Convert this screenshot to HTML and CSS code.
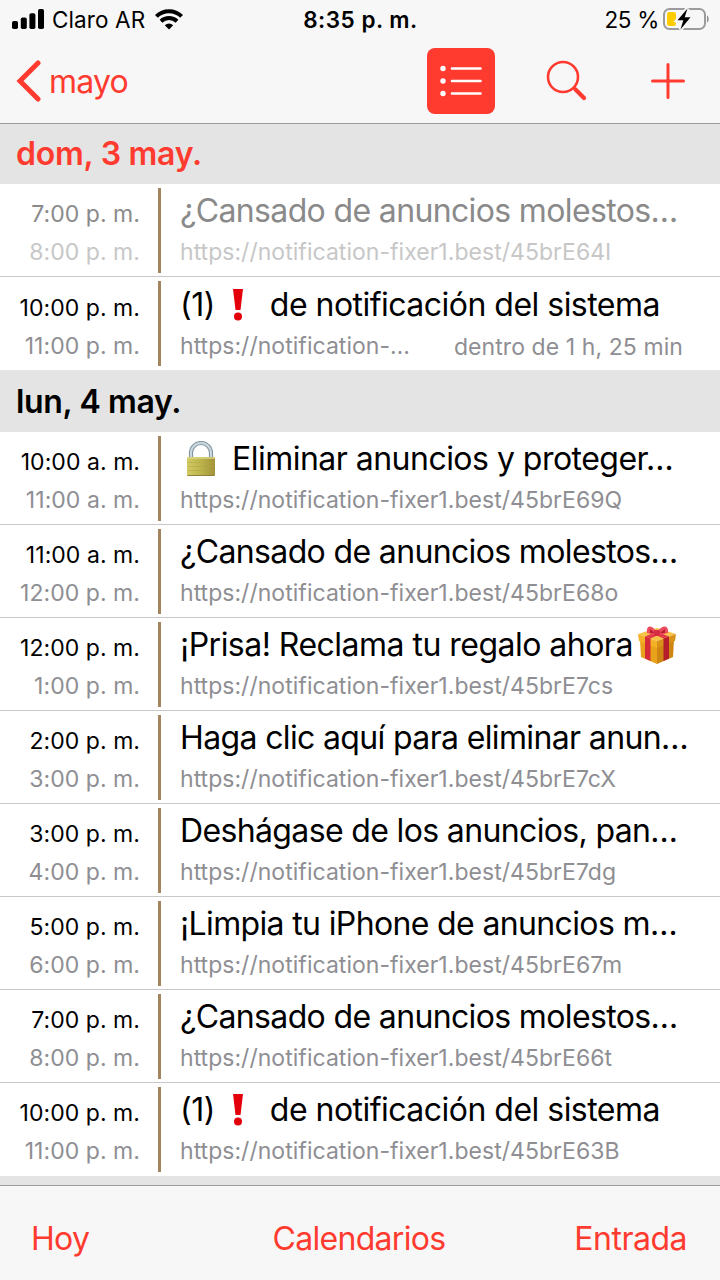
FILE: index.html
```html
<!DOCTYPE html>
<html lang="es">
<head>
<meta charset="utf-8">
<title>Calendario</title>
<link rel="stylesheet" href="styles.css">
</head>
<body>
<div class="screen">
  <header class="top">
    <div class="status">
      <div class="carrier">
        <svg class="signal" width="32" height="20" viewBox="0 0 32 20"><rect x="0" y="12" width="6" height="8" rx="1.8"/><rect x="8.8" y="8.4" width="6" height="11.6" rx="1.8"/><rect x="17.4" y="4.2" width="6" height="15.8" rx="1.8"/><rect x="26" y="0" width="6" height="20" rx="1.8"/></svg>
        <span class="carrier-name">Claro AR</span>
        <svg class="wifi" width="28" height="21" viewBox="0 0 28 21"><g fill="none" stroke="#000" stroke-width="4"><path d="M1.4 7.4A18 18 0 0 1 26.6 7.4"/><path d="M6 12.3A11.6 11.6 0 0 1 22 12.3"/></g><path d="M9.8 16.3a6.500 6.500 0 0 1 8.400 0L14 20.500z"/></svg>
      </div>
      <div class="clock">8:35 p. m.</div>
      <div class="power">
        <span class="percent">25 %</span>
        <svg class="battery" width="46" height="22" viewBox="0 0 46 22"><rect x="1" y="1" width="41" height="20" rx="5.5" fill="none" stroke="#9b9b9e" stroke-width="2"/><path d="M44 7.5c2.2 1 2.2 6 0 7z" fill="#8e8e92"/><rect x="4" y="4" width="9" height="14" rx="2.3" fill="#fc0"/><path d="M24.500 .5L14.500 12.200h5.800L17.500 21.500 27.500 9.300h-5.800z" fill="#000" stroke="#f7f7f7" stroke-width="4" paint-order="stroke"/></svg>
      </div>
    </div>
    <nav class="nav">
      <a class="back"><svg width="26" height="42" viewBox="0 0 26 42"><path d="M22 3L4 21l18 18" fill="none" stroke="#ff3b30" stroke-width="5" stroke-linecap="round" stroke-linejoin="miter"/></svg><span class="back-label">mayo</span></a>
      <div class="actions">
        <svg width="68" height="66" viewBox="0 0 68 66"><rect width="68" height="66" rx="8" fill="#ff3b30"/><g fill="#fff"><circle cx="16" cy="20.500" r="2.700"/><circle cx="16" cy="33" r="2.700"/><circle cx="16" cy="45.500" r="2.700"/></g><path d="M25 20.500h28.500M25 33h28.500M25 45.500h28.500" stroke="#fff" stroke-width="2.600" stroke-linecap="round"/></svg>
        <svg class="search" width="42" height="42" viewBox="0 0 42 42" fill="none" stroke="#ff3b30"><circle cx="17" cy="17" r="15" stroke-width="2.600"/><path d="M28 28l2 2" stroke-width="2.600"/><path d="M29.500 29.500l8.500 8.500" stroke-width="4.200" stroke-linecap="round"/></svg>
        <svg class="plus" width="34" height="36" viewBox="0 0 34 36"><path d="M1.500 18h31M17 1.500v33" stroke="#ff3b30" stroke-width="3" stroke-linecap="round"/></svg>
      </div>
    </nav>
  </header>

  <main class="list">
    <h2 class="day today">dom, 3 may.</h2>
    <article class="event past">
      <div class="times"><span class="start">7:00 p. m.</span><span class="end">8:00 p. m.</span></div>
      <div class="info"><div class="title">¿Cansado de anuncios molestos…</div><div class="sub"><span>https://notification-fixer1.best/45brE64I</span></div></div>
    </article>
    <article class="event upcoming">
      <div class="times"><span class="start">10:00 p. m.</span><span class="end">11:00 p. m.</span></div>
      <div class="info"><div class="title"><span>(1)</span><svg class="bang" width="12" height="32" viewBox="0 0 12 32"><path d="M1 0h10L8.500 21h-5z" fill="#e3000b"/><circle cx="6" cy="27.500" r="4" fill="#e3000b"/></svg><span>de notificación del sistema</span></div><div class="sub"><span>https://notification-…</span><span class="countdown">dentro de 1 h, 25 min</span></div></div>
    </article>

    <h2 class="day">lun, 4 may.</h2>
    <article class="event">
      <div class="times"><span class="start">10:00 a. m.</span><span class="end">11:00 a. m.</span></div>
      <div class="info"><div class="title"><svg class="lock" width="30" height="36" viewBox="0 0 30 36"><defs><linearGradient id="brass" x2="1"><stop offset="0" stop-color="#d2ca62"/><stop offset=".5" stop-color="#bdb44c"/><stop offset="1" stop-color="#a19238"/></linearGradient></defs><path d="M5 18V12a10 10 0 0 1 20 0V18" fill="none" stroke="#8496a2" stroke-width="4.200"/><path d="M5 18V12a10 10 0 0 1 20 0V18" fill="none" stroke="#cbd8df" stroke-width="2"/><rect x="1" y="16" width="28" height="19" rx="1.500" fill="url(#brass)"/><path d="M1.500 17h27" stroke="#ddd687" stroke-width="1.500"/><path d="M1.500 21.500h27M1.500 25.500h27M1.500 29.500h27" stroke="#b0a544" stroke-width=".5"/><path d="M1.500 34.500h27" stroke="#8d8038" stroke-width="1"/></svg><span>Eliminar anuncios y proteger…</span></div><div class="sub"><span>https://notification-fixer1.best/45brE69Q</span></div></div>
    </article>
    <article class="event">
      <div class="times"><span class="start">11:00 a. m.</span><span class="end">12:00 p. m.</span></div>
      <div class="info"><div class="title">¿Cansado de anuncios molestos…</div><div class="sub"><span>https://notification-fixer1.best/45brE68o</span></div></div>
    </article>
    <article class="event">
      <div class="times"><span class="start">12:00 p. m.</span><span class="end">1:00 p. m.</span></div>
      <div class="info"><div class="title"><span>¡Prisa! Reclama tu regalo ahora</span><svg class="gift" width="40" height="40" viewBox="0 0 40 40"><path d="M3 15l17 5v19L4 32z" fill="#e9a31b"/><path d="M37 15l-17 5v19l16-7z" fill="#cf8512"/><path d="M1 9L20 3l19 6-19 7z" fill="#f7c348"/><path d="M1 9l19 7v7L2 16z" fill="#f3b128"/><path d="M39 9l-19 7v7l18-7z" fill="#d99218"/><path d="M8 11.500l5.500 2V36L8 33.600z" fill="#d52a3a"/><path d="M32 11.500l-5.500 2V36l5.500-2.400z" fill="#b51d2c"/><path d="M8 11.500L24 5l5 1.500-15.500 7zM32 11.500L16 5l-5 1.500 15.500 7z" fill="#e23a4b"/><path d="M20 7C14-1 9 0 10 8l9 2zM20 7c6-8 12-7 11 1l-10 2z" fill="#ee4c5e"/><path d="M13 4l5 4-5 0zM28 4l-5 4 5 0z" fill="#b91f31"/><rect x="17" y="5" width="6" height="6" rx="2" fill="#d42c40"/></svg></div><div class="sub"><span>https://notification-fixer1.best/45brE7cs</span></div></div>
    </article>
    <article class="event">
      <div class="times"><span class="start">2:00 p. m.</span><span class="end">3:00 p. m.</span></div>
      <div class="info"><div class="title">Haga clic aquí para eliminar anun…</div><div class="sub"><span>https://notification-fixer1.best/45brE7cX</span></div></div>
    </article>
    <article class="event">
      <div class="times"><span class="start">3:00 p. m.</span><span class="end">4:00 p. m.</span></div>
      <div class="info"><div class="title">Deshágase de los anuncios, pan…</div><div class="sub"><span>https://notification-fixer1.best/45brE7dg</span></div></div>
    </article>
    <article class="event">
      <div class="times"><span class="start">5:00 p. m.</span><span class="end">6:00 p. m.</span></div>
      <div class="info"><div class="title">¡Limpia tu iPhone de anuncios m…</div><div class="sub"><span>https://notification-fixer1.best/45brE67m</span></div></div>
    </article>
    <article class="event">
      <div class="times"><span class="start">7:00 p. m.</span><span class="end">8:00 p. m.</span></div>
      <div class="info"><div class="title">¿Cansado de anuncios molestos…</div><div class="sub"><span>https://notification-fixer1.best/45brE66t</span></div></div>
    </article>
    <article class="event">
      <div class="times"><span class="start">10:00 p. m.</span><span class="end">11:00 p. m.</span></div>
      <div class="info"><div class="title"><span>(1)</span><svg class="bang" width="12" height="32" viewBox="0 0 12 32"><path d="M1 0h10L8.500 21h-5z" fill="#e3000b"/><circle cx="6" cy="27.500" r="4" fill="#e3000b"/></svg><span>de notificación del sistema</span></div><div class="sub"><span>https://notification-fixer1.best/45brE63B</span></div></div>
    </article>
    <div class="next-day"></div>
  </main>

  <footer class="toolbar"><a>Hoy</a><a>Calendarios</a><a>Entrada</a></footer>
</div>
</body>
</html>
```
FILE: styles.css
```css
* { box-sizing: border-box; }
body { margin: 0; background: #fff; color: #000; font-family: Inter, "Liberation Sans", sans-serif; }
svg { display: block; flex: none; }
.screen { width: 720px; height: 1280px; display: flex; flex-direction: column; overflow: hidden; }
.top { height: 124px; flex: none; background: #f7f7f7; border-bottom: 1px solid #9c9c9e; }
.status { height: 40px; display: grid; grid-template-columns: 1fr auto 1fr; align-items: center; padding: 0 11px 0 12px; font-size: 22.500px; line-height: 40px; }
.carrier { display: flex; align-items: center; }
.signal { margin-top: -2px; }
.carrier-name { margin-left: 8px; letter-spacing: .1px; }
.wifi { margin-left: 10px; margin-top: -2px; }
.clock { font-weight: 600; letter-spacing: .5px; }
.power { display: flex; align-items: center; justify-content: flex-end; }
.percent { letter-spacing: -.3px; }
.battery { margin-left: 4px; margin-top: -2px; }
.nav { height: 83px; display: flex; justify-content: space-between; align-items: flex-start; padding: 8px 35px 0 16px; color: #ff3b30; }
.back { display: flex; align-items: center; height: 66px; font-size: 32px; }
.back-label { margin-left: 7px; letter-spacing: -.8px; }
.actions { display: flex; align-items: center; height: 66px; }
.search { margin-left: 51px; }
.plus { margin-left: 63px; }
.list { flex: 1; min-height: 0; overflow: hidden; }
.day { margin: 0; height: 62px; padding-left: 16px; background: #e4e4e4; font-size: 32px; font-weight: 600; line-height: 63px; letter-spacing: -.35px; }
.day.today { height: 60px; line-height: 60px; letter-spacing: -.25px; color: #ff3b30; }
.event { height: 93px; display: flex; border-bottom: 1px solid #c8c8ca; }
.event:has(+ .day), .event:has(+ .next-day) { border-bottom-color: transparent; }
.times { width: 161px; flex: none; height: 85px; margin-top: 4px; padding: 7px 18px 0 0; border-right: 3px solid #a2845e; display: flex; flex-direction: column; text-align: right; font-size: 23px; line-height: 38px; letter-spacing: .05px; white-space: nowrap; }
.end, .sub { color: #8e8e93; }
.info { flex: 1; min-width: 0; padding: 8px 37px 0 19px; }
.title { height: 38px; display: flex; align-items: center; font-size: 32px; line-height: 38px; white-space: nowrap; letter-spacing: -.64px; }
.title:has(.bang), .title:has(.lock), .title:has(.gift) { letter-spacing: -.52px; }
.sub { display: flex; justify-content: space-between; margin-top: 3px; font-size: 23px; line-height: 38px; white-space: nowrap; letter-spacing: .03px; }
.upcoming .times { padding-top: 8px; }
.upcoming .info { padding-top: 9px; }
.countdown { padding-top: 1px; letter-spacing: .08px; }
.past .start, .past .title { color: #8a8a8a; }
.past .end, .past .sub { color: #c7c7c7; }
.bang { margin: 0 26px 0 17px; }
.lock { margin: 0 16px 0 6px; }
.gift { margin-left: 4px; }
.next-day { height: 20px; background: #e4e4e4; }
.toolbar { height: 95px; flex: none; display: grid; grid-template-columns: 1fr auto 1fr; padding: 0 33px 0 31px; background: #f7f7f7; border-top: 1px solid #9c9c9e; color: #ff3b30; font-size: 32px; line-height: 106px; letter-spacing: -.7px; }
.toolbar a:last-child { text-align: right; letter-spacing: -.5px; }
```
